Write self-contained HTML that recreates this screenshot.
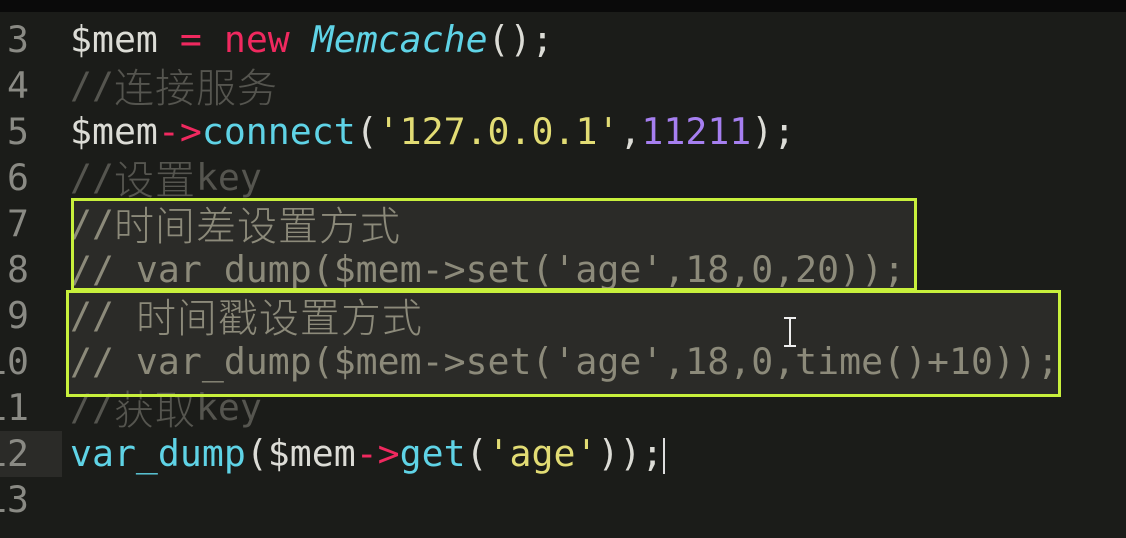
<!DOCTYPE html>
<html><head><meta charset="utf-8"><style>
body{margin:0;width:1126px;height:538px;background:#1b1c19;overflow:hidden;position:relative;font-family:"DejaVu Sans Mono","Noto Sans CJK SC",monospace;font-size:36.5px}
.top{position:absolute;left:0;top:0;width:1126px;height:12px;background:#0a0a0a}
.l{position:absolute;left:70px;height:46px;line-height:46px;white-space:pre;color:#dcdcd6}
.n{position:absolute;height:46px;line-height:46px;right:1097px;color:#8a8a84;text-align:right}
.c{letter-spacing:1px;font-family:"Noto Sans CJK SC",sans-serif;font-size:40px;font-weight:300;vertical-align:top;line-height:44px}
.cm{color:#55554f}.sel{color:#8c8a7a}
.r{color:#f0295f}.b{color:#5fd3e6}.y{color:#e2dc74}.p{color:#a67ff0}
.box{position:absolute;border:3px solid #c8f03c;box-sizing:border-box}
.bg{position:absolute;background:#2b2b28}
</style></head><body>
<div class="top"></div>
<div class="bg" style="left:0;top:431px;width:62px;height:46px"></div>
<div class="bg" style="left:72px;top:200px;width:843px;height:90px"></div>
<div class="bg" style="left:68px;top:292px;width:990px;height:103px"></div>
<div class="n" style="top:17px">3</div>
<div class="n" style="top:63px">4</div>
<div class="n" style="top:109px">5</div>
<div class="n" style="top:155px">6</div>
<div class="n" style="top:201px">7</div>
<div class="n" style="top:247px">8</div>
<div class="n" style="top:293px">9</div>
<div class="n" style="top:339px">10</div>
<div class="n" style="top:385px">11</div>
<div class="n" style="top:431px">12</div>
<div class="n" style="top:477px">13</div>
<div class="l" style="top:17px">$mem <span class="r">=</span> <span class="r">new</span> <i class="b">Memcache</i>();</div>
<div class="l cm" style="top:63px">//<span class="c">连接服务</span></div>
<div class="l" style="top:109px">$mem<span class="r">-&gt;</span><span class="b">connect</span>(<span class="y">'127.0.0.1'</span>,<span class="p">11211</span>);</div>
<div class="l cm" style="top:155px">//<span class="c">设置</span>key</div>
<div class="l sel" style="top:201px">//<span class="c">时间差设置方式</span></div>
<div class="l sel" style="top:247px">// var_dump($mem-&gt;set('age',18,0,20));</div>
<div class="l sel" style="top:293px">// <span class="c">时间戳设置方式</span></div>
<div class="l sel" style="top:339px">// var_dump($mem-&gt;set('age',18,0,time()+10));</div>
<div class="l cm" style="top:385px">//<span class="c">获取</span>key</div>
<div class="l" style="top:431px"><span class="b">var_dump</span>($mem<span class="r">-&gt;</span><span class="b">get</span>(<span class="y">'age'</span>));<span style="display:inline-block;width:2px;height:36px;background:#ddd;vertical-align:middle"></span></div>
<div class="box" style="left:71px;top:198px;width:846px;height:93px"></div>
<div class="box" style="left:66px;top:290px;width:995px;height:107px"></div>
<div style="position:absolute;left:789px;top:317px;width:2px;height:30px;background:#eee"></div>
<div style="position:absolute;left:784px;top:317px;width:12px;height:2px;background:#eee"></div>
<div style="position:absolute;left:784px;top:345px;width:12px;height:2px;background:#eee"></div>
</body></html>
